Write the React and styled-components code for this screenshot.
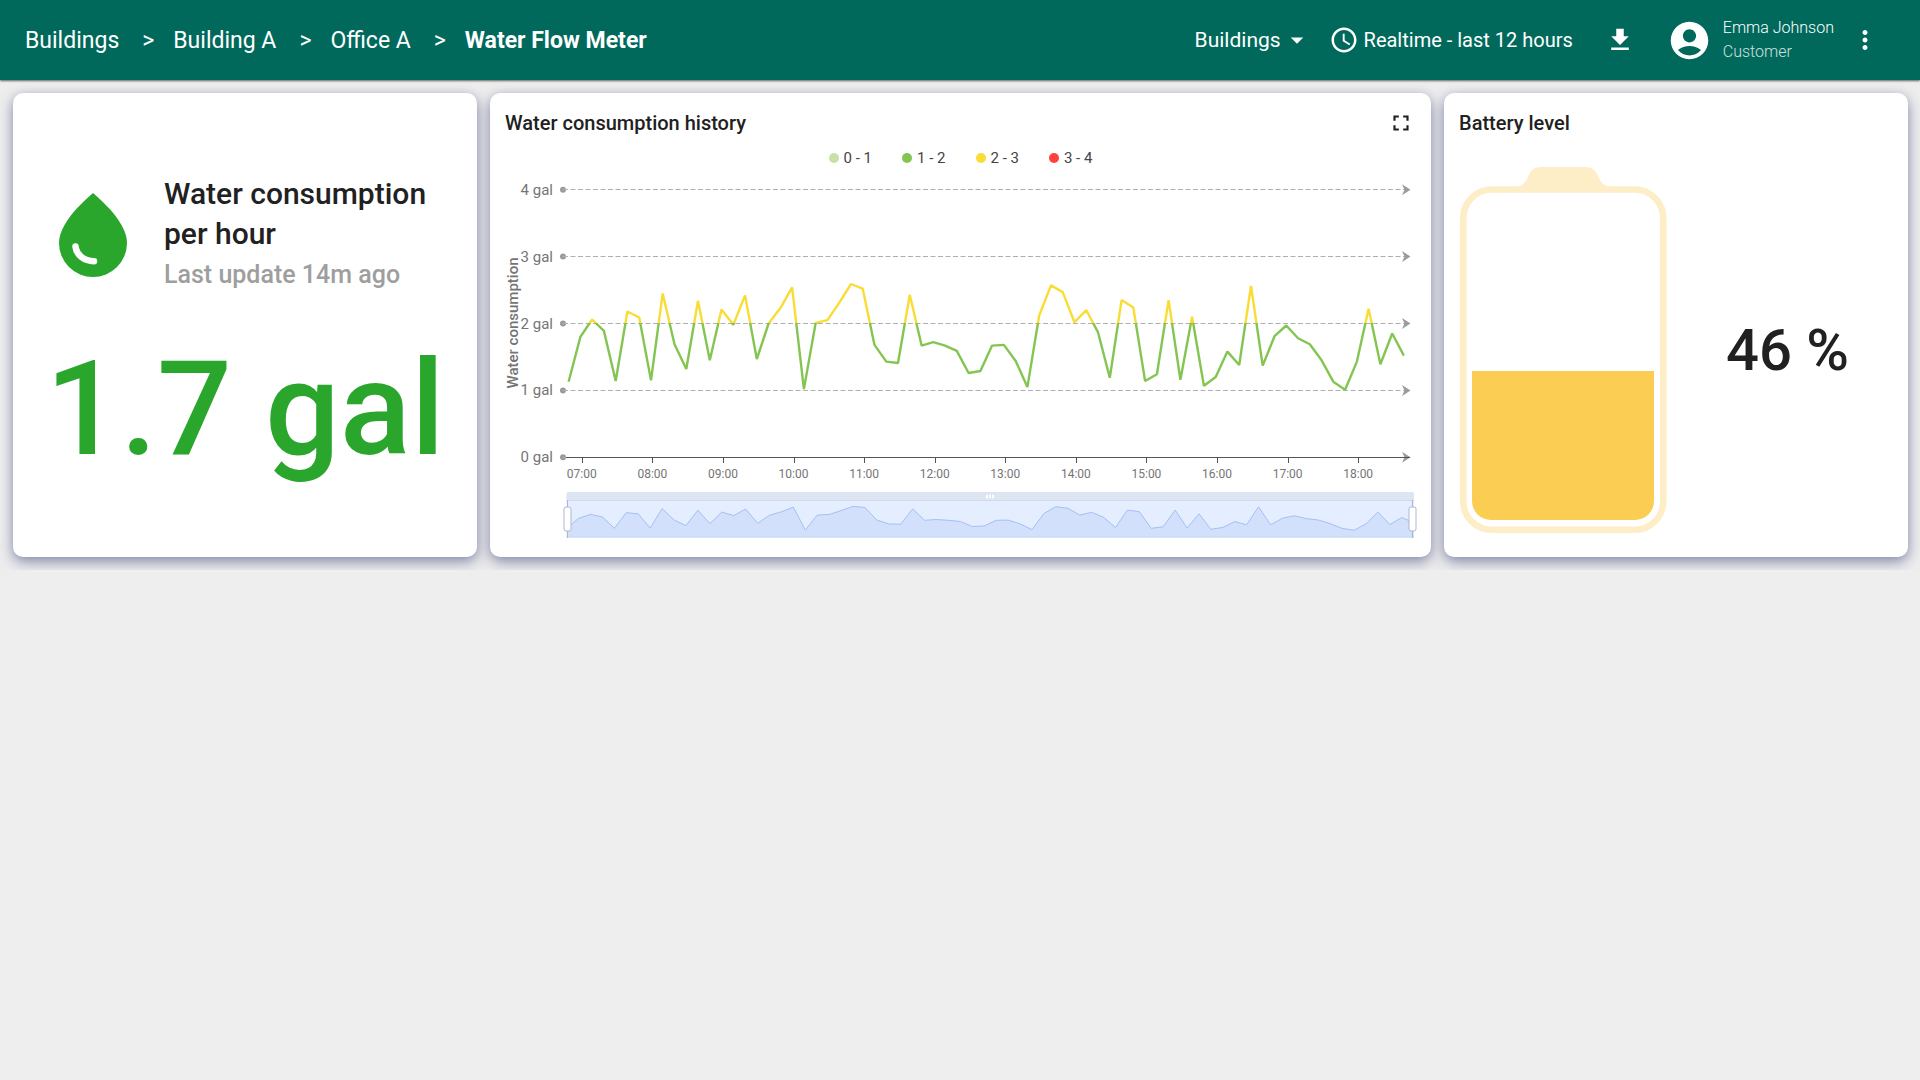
import React from "react";
import styled, { createGlobalStyle } from "styled-components";
import {
  MdAccessTime,
  MdAccountCircle,
  MdArrowDropDown,
  MdFileDownload,
  MdFullscreen,
  MdMoreVert,
} from "react-icons/md";

const GlobalStyle = createGlobalStyle`
  *, *::before, *::after { box-sizing: border-box; }
  body {
    margin: 0;
    background: #eee;
    color: #212121;
    font-family: Roboto, "Liberation Sans", sans-serif;
  }
  button, select { font: inherit; color: inherit; }
`;

const Toolbar = styled.header`
  position: relative;
  display: flex;
  align-items: center;
  justify-content: space-between;
  height: 80px;
  padding: 0 40px 0 25px;
  background: #00695c;
  color: #fff;
  box-shadow: 0 1px 2px rgba(0, 0, 0, 0.6);
`;

const Crumbs = styled.ol`
  display: flex;
  align-items: center;
  margin: 0;
  padding: 0;
  list-style: none;
  font-size: 23px;
  line-height: 31px;
`;

const Crumb = styled.li`
  display: flex;

  & + &::before {
    content: ">";
    margin: 0 19px 0 23px;
  }
`;

const CrumbLink = styled.a`
  color: inherit;
  text-decoration: none;
  font-weight: ${(p) => (p.$current ? 700 : 400)};
`;

const Actions = styled.div`
  display: flex;
  align-items: center;
  font-size: 20px;
  line-height: 30px;
`;

const StateField = styled.label`
  display: flex;
  align-items: center;
  margin-right: 17px;
  font-size: 21px;

  svg {
    margin-left: -30px;
    pointer-events: none;
  }
`;

const StateSelect = styled.select`
  appearance: none;
  border: 0;
  padding: 0 30px 0 0;
  background: transparent;
  line-height: 30px;

  option { color: #212121; }
`;

const ToolButton = styled.button`
  display: flex;
  align-items: center;
  gap: 5px;
  border: 0;
  padding: 0;
  margin-right: ${(p) => p.$after || 0}px;
  background: transparent;
  cursor: pointer;
`;

const User = styled.div`
  display: flex;
  align-items: center;
  gap: 11px;
  margin-right: 16px;
`;

const UserText = styled.div`
  display: flex;
  flex-direction: column;
  font-size: 16px;
  font-weight: 300;
  line-height: 24px;
`;

const UserRole = styled.span`
  opacity: 0.8;
`;

const Dashboard = styled.main`
  display: grid;
  grid-template-columns: repeat(4, 1fr);
  gap: 13px;
  padding: 13px 12px 13px 13px;
`;

const Card = styled.section`
  grid-column: span ${(p) => p.$span || 1};
  display: flex;
  flex-direction: column;
  min-width: 0;
  min-height: 464px;
  border-radius: 10px;
  background: #fff;
  box-shadow: 0 5px 14px rgba(40, 50, 110, 0.5), 0 0 8px rgba(40, 50, 110, 0.08);
`;

const CardHeader = styled.div`
  display: flex;
  align-items: center;
  justify-content: space-between;
  padding: 15px 17px 0 15px;
`;

const CardTitle = styled.h2`
  margin: 0;
  font-size: 20px;
  font-weight: 500;
  line-height: 30px;
`;

const ValueCard = styled(Card)`
  justify-content: center;
  gap: 46px;
`;

const ValueHead = styled.div`
  display: flex;
  align-items: center;
  gap: 37px;
  padding: 0 46px;
`;

const ValueTitle = styled.h2`
  margin: 0;
  font-size: 30px;
  font-weight: 500;
  line-height: 40px;
`;

const Updated = styled.p`
  margin: 0;
  color: #9e9e9e;
  font-size: 25px;
  font-weight: 500;
  line-height: 42px;
`;

const BigValue = styled.p`
  margin: 0;
  color: #2aa62d;
  font-size: 132px;
  font-weight: 500;
  line-height: 134px;
  text-align: center;
  white-space: nowrap;
`;

const Legend = styled.ul`
  display: flex;
  justify-content: center;
  gap: 30px;
  margin: 10px 0 0;
  padding: 0;
  list-style: none;
`;

const LegendItem = styled.li`
  display: flex;
  align-items: center;
  gap: 5px;
  color: #444;
  font-size: 15px;
  line-height: 20px;

  &::before {
    content: "";
    width: 10px;
    height: 10px;
    border-radius: 50%;
    background: ${(p) => p.$color};
  }
`;

const Chart = styled.svg`
  display: block;
  width: 100%;
  height: auto;
  font-family: inherit;
`;

const BatteryBody = styled.div`
  flex: 1;
  display: grid;
  grid-template-columns: auto 1fr;
  align-items: center;
  padding: 5px 0 0 16px;
`;

const BatteryValue = styled.p`
  margin: 0;
  font-size: 58px;
  font-weight: 500;
  line-height: 64px;
  text-align: center;
  white-space: nowrap;
`;

const ranges = [
  { label: "0 - 1", color: "#c5e1a5" },
  { label: "1 - 2", color: "#84c551" },
  { label: "2 - 3", color: "#f9dc35" },
  { label: "3 - 4", color: "#ff403c" },
];

// Gallons, one reading every ten minutes.
const readings = [
  1.13, 1.8, 2.06, 1.89, 1.14, 2.18, 2.09, 1.15, 2.45, 1.69, 1.32, 2.34,
  1.45, 2.21, 1.98, 2.42, 1.47, 2.0, 2.23, 2.54, 1.02, 2.01, 2.05, 2.31,
  2.59, 2.52, 1.68, 1.43, 1.41, 2.43, 1.67, 1.72, 1.67, 1.59, 1.26, 1.29,
  1.67, 1.68, 1.44, 1.05, 2.12, 2.57, 2.47, 2.02, 2.2, 1.87, 1.19, 2.35,
  2.24, 1.14, 1.24, 2.35, 1.16, 2.1, 1.07, 1.2, 1.58, 1.38, 2.56, 1.37,
  1.81, 1.97, 1.78, 1.69, 1.45, 1.13, 1.01, 1.43, 2.22, 1.39, 1.85, 1.52,
];

const hours = ["07", "08", "09", "10", "11", "12", "13", "14", "15", "16", "17", "18"];

const ZERO_Y = 289.3;
const GAL = 66.9;
const plotX = (i) => 78.6 + i * 11.765;
const plotY = (v) => ZERO_Y - v * GAL;
const brushX = (i) => 76.7 + i * 11.93;
const brushY = (v) => 377.5 - v * 15.1;
const toPoints = (fx, fy) => readings.map((v, i) => `${fx(i).toFixed(1)},${fy(v).toFixed(1)}`).join(" ");

function BrushHandle({ x }) {
  return (
    <g>
      <line x1={x} y1="332" x2={x} y2="370" stroke="#acb8d1" />
      <rect x={x - 3.5} y="339" width="7" height="24" rx="2" fill="#fff" stroke="#acb8d1" />
    </g>
  );
}

function HistoryChart() {
  return (
    <Chart viewBox="0 0 941 389" role="img" aria-label="Water consumption history">
      <defs>
        <linearGradient id="level" gradientUnits="userSpaceOnUse" x1="0" y1={plotY(4)} x2="0" y2={plotY(0)}>
          <stop offset="0.5" stopColor="#f9dc35" />
          <stop offset="0.5" stopColor="#84c551" />
        </linearGradient>
      </defs>

      <text transform="translate(28 155) rotate(-90)" textAnchor="middle" fontSize="15" fontWeight="500" fill="#757575">
        Water consumption
      </text>

      {[4, 3, 2, 1, 0].map((v) => {
        const y = plotY(v);
        const lineY = Math.floor(y) + 0.5;
        return (
          <g key={v}>
            <text x="63" y={y + 5} textAnchor="end" fontSize="15" fill="#757575">{`${v} gal`}</text>
            <circle cx="73" cy={y} r="3" fill="#9b9b9b" />
            <line x1="73" y1={lineY} x2="920" y2={lineY} stroke="#b0b0b0" strokeDasharray="5 2.5" />
            <path d={`M920.5 ${y} l-8.5 -5.5 l2.5 5.5 l-2.5 5.5 z`} fill="#9b9b9b" />
          </g>
        );
      })}

      <line x1="76" y1="289.5" x2="920" y2="289.5" stroke="#555" />
      {hours.map((h, i) => {
        const x = 92.3 + i * 70.58;
        const tick = Math.floor(x) + 0.5;
        return (
          <g key={h}>
            <line x1={tick} y1="290" x2={tick} y2="295" stroke="#555" />
            <text x={x - 0.5} y="310" textAnchor="middle" fontSize="12" fill="#757575">{`${h}:00`}</text>
          </g>
        );
      })}

      <polyline points={toPoints(plotX, plotY)} fill="none" stroke="url(#level)" strokeWidth="2.4" strokeLinejoin="bevel" />

      <path d="M76.5 332.5 V326 a2 2 0 0 1 2 -2 H922 a2 2 0 0 1 2 2 V332.5 Z" fill="#dee5f2" />
      <rect x="76.5" y="332.5" width="847.5" height="37" fill="#e5eefe" />
      <polygon points={`77,369.5 ${toPoints(brushX, brushY)} 924,369.5`} fill="#d2e0fb" />
      <polyline points={toPoints(brushX, brushY)} fill="none" stroke="#a3c0f5" />
      <line x1="76.5" y1="332.5" x2="924" y2="332.5" stroke="#cfdaee" />
      <line x1="76.5" y1="369" x2="924" y2="369" stroke="#cbd8f0" />
      {[496, 499, 502].map((x) => (
        <rect key={x} x={x} y="326.5" width="2" height="4" rx="1" fill="#fff" />
      ))}
      <BrushHandle x={77.5} />
      <BrushHandle x={922.5} />
    </Chart>
  );
}

function Battery({ level }) {
  const height = Math.round((322 * level) / 100);
  const top = 352 - height;
  return (
    <svg width="207" height="366" viewBox="0 0 207 366" role="img" aria-label={`Battery ${level} percent`}>
      <path d="M54 20 C63 19 66 15 68 10 C70 4 74 0 81 0 H126 C133 0 136 4 138.500 10 C140.500 15 143 19 152 20 Z" fill="#feeec7" />
      <rect x="3.250" y="22.500" width="200" height="340.250" rx="28.500" fill="#fff" stroke="#feeec7" strokeWidth="6.500" />
      <path d={`M12 ${top} H194 V334 a19 19 0 0 1 -19 19 H31 a19 19 0 0 1 -19 -19 Z`} fill="#fbce53" />
    </svg>
  );
}

export default function App() {
  return (
    <>
      <GlobalStyle />
      <Toolbar>
        <nav aria-label="Breadcrumb">
          <Crumbs>
            <Crumb><CrumbLink href="#buildings">Buildings</CrumbLink></Crumb>
            <Crumb><CrumbLink href="#building-a">Building A</CrumbLink></Crumb>
            <Crumb><CrumbLink href="#office-a">Office A</CrumbLink></Crumb>
            <Crumb><CrumbLink href="#meter" $current aria-current="page">Water Flow Meter</CrumbLink></Crumb>
          </Crumbs>
        </nav>
        <Actions>
          <StateField>
            <StateSelect aria-label="Dashboard state" defaultValue="Buildings">
              <option>Buildings</option>
            </StateSelect>
            <MdArrowDropDown size={30} />
          </StateField>
          <ToolButton type="button" $after={32}>
            <MdAccessTime size={30} />
            Realtime - last 12 hours
          </ToolButton>
          <ToolButton type="button" aria-label="Export dashboard" $after={32}>
            <MdFileDownload size={30} />
          </ToolButton>
          <User>
            <MdAccountCircle size={45} />
            <UserText>
              <span>Emma Johnson</span>
              <UserRole>Customer</UserRole>
            </UserText>
          </User>
          <ToolButton type="button" aria-label="More">
            <MdMoreVert size={30} />
          </ToolButton>
        </Actions>
      </Toolbar>

      <Dashboard>
        <ValueCard>
          <ValueHead>
            <svg width="68" height="84" viewBox="0 0 68 84" aria-hidden="true">
              <path d="M34 0 C14 17 0 35 0 50 A34 34 0 0 0 68 50 C68 35 54 17 34 0 Z" fill="#2aa62d" />
              <path d="M16.500 53.500 C17.500 62 25 68 35 68.200" fill="none" stroke="#fff" strokeWidth="6.500" strokeLinecap="round" />
            </svg>
            <div>
              <ValueTitle>Water consumption<br />per hour</ValueTitle>
              <Updated>Last update 14m ago</Updated>
            </div>
          </ValueHead>
          <BigValue>1.7 gal</BigValue>
        </ValueCard>

        <Card $span={2}>
          <CardHeader>
            <CardTitle>Water consumption history</CardTitle>
            <ToolButton type="button" aria-label="Fullscreen">
              <MdFullscreen size={26} />
            </ToolButton>
          </CardHeader>
          <Legend>
            {ranges.map((r) => (
              <LegendItem key={r.label} $color={r.color}>{r.label}</LegendItem>
            ))}
          </Legend>
          <HistoryChart />
        </Card>

        <Card>
          <CardHeader>
            <CardTitle>Battery level</CardTitle>
          </CardHeader>
          <BatteryBody>
            <Battery level={46} />
            <BatteryValue>46 %</BatteryValue>
          </BatteryBody>
        </Card>
      </Dashboard>
    </>
  );
}
